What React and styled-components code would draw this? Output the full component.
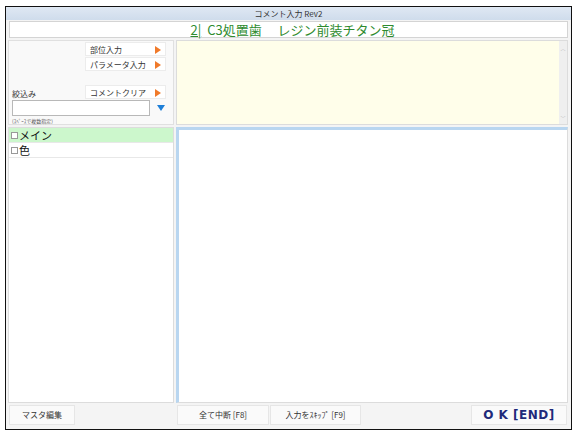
import React from 'react'
import styled, { createGlobalStyle } from 'styled-components'

const GlobalStyle = createGlobalStyle`
  html, body { margin: 0; padding: 0; background: #ffffff; }
  body { font-family: "Noto Sans CJK JP", "Liberation Sans", sans-serif; }
`;

const Page = styled.div`
  width: 578px;
  height: 438px;
  padding: 6px 6px 0 5px;
  box-sizing: border-box;
  background: #ffffff;
`;

const Window = styled.div`
  width: 567px;
  height: 424px;
  border: 1px solid #111;
  box-sizing: border-box;
  background: #f4f4f4;
  display: flex;
  flex-direction: column;
`;

const TitleBar = styled.div`
  height: 13px;
  background: linear-gradient(#dfe8f3, #cfdcec);
  font-size: 8px;
  line-height: 13px;
  color: #333;
  text-align: center;
`;

const Header = styled.div`
  margin: 1px 3px 0 3px;
  height: 15px;
  background: #fff;
  border: 1px solid #d4d4d4;
  font-size: 13px;
  line-height: 15px;
  color: #2e8b2e;
  text-align: center;
  padding-left: 8px;
`;

const ToothNo = styled.span`
  text-decoration: underline;
  margin-right: 6px;
`;

const Body = styled.div`
  flex: 1;
  display: grid;
  grid-template-columns: 166px 1fr;
  grid-template-rows: 85px 1fr;
  gap: 2px;
  padding: 2px 3px 0 2px;
  min-height: 0;
`;

const FilterPanel = styled.div`
  background: #f9f9f9;
  border: 1px solid #e0e0e0;
  display: flex;
  flex-direction: column;
  padding: 0 0 0 3px;
  box-sizing: border-box;
`;

const ActionButton = styled.div`
  margin-left: 73px;
  width: 81px;
  height: 14px;
  background: #fff;
  border: 1px solid #ececec;
  font-size: 8px;
  line-height: 14px;
  color: #333;
  padding-left: 4px;
  box-sizing: border-box;
  position: relative;
  margin-top: ${p => p.gap || 1}px;
  &::after {
    content: '';
    position: absolute;
    right: 4px;
    top: 3px;
    border-left: 6px solid #f07a2a;
    border-top: 4px solid transparent;
    border-bottom: 4px solid transparent;
  }
`;

const FilterRow = styled.div`
  display: flex;
  align-items: center;
  margin-top: 2px;
`;

const FilterLabel = styled.div`
  font-size: 8px;
  color: #333;
  margin-top: -11px;
  height: 10px;
`;

const FilterInput = styled.div`
  width: 138px;
  height: 16px;
  background: #fff;
  border: 1px solid #b8b8b8;
  box-sizing: border-box;
`;

const DropArrow = styled.div`
  margin-left: 7px;
  border-top: 6px solid #1e7fd8;
  border-left: 4px solid transparent;
  border-right: 4px solid transparent;
`;

const Hint = styled.div`
  font-size: 5px;
  color: #555;
  margin-top: 1px;
`;

const MemoPanel = styled.div`
  background: #fffeea;
  border: 1px solid #dcdcdc;
  position: relative;
`;

const ScrollTrack = styled.div`
  position: absolute;
  right: 0;
  top: 0;
  bottom: 0;
  width: 8px;
  background: #efefef;
  display: flex;
  flex-direction: column;
  justify-content: space-between;
  align-items: center;
  font-size: 5px;
  color: #aaa;
  padding: 3px 0;
  box-sizing: border-box;
`;

const ListPanel = styled.div`
  background: #fff;
  border: 1px solid #dcdcdc;
`;

const ListRow = styled.div`
  height: 14px;
  display: flex;
  align-items: center;
  font-size: 11px;
  color: #111;
  border-bottom: 1px solid #e8e8e8;
  background: ${p => (p.active ? '#ccf7cc' : '#fff')};
`;

const Check = styled.span`
  width: 5px;
  height: 5px;
  border: 1px solid #999;
  margin: 0 1px 0 2px;
  background: #fff;
`;

const EditPanel = styled.div`
  background: #fff;
  border: 1px solid #dcdcdc;
  border-top: 3px solid #b9d6f0;
  border-left: 3px solid #b9d6f0;
`;

const Footer = styled.div`
  height: 26px;
  display: flex;
  align-items: center;
  padding: 0 4px 3px 3px;
  box-sizing: border-box;
`;

const FooterButton = styled.div`
  width: ${p => p.w}px;
  height: 20px;
  margin-left: ${p => p.ml || 0}px;
  background: #fafafa;
  border: 1px solid #e6e6e6;
  box-sizing: border-box;
  font-size: 8px;
  line-height: 18px;
  text-align: center;
  color: #333;
`;

const OkButton = styled(FooterButton)`
  margin-left: auto;
  font-family: "DejaVu Sans", "Liberation Sans", sans-serif;
  font-weight: bold;
  font-size: 12px;
  color: #1f2a7a;
  letter-spacing: 0.5px;
`;

export default function App() {
  return (
    <Page>
      <GlobalStyle />
      <Window>
        <TitleBar>コメント入力 Rev2</TitleBar>
        <Header>
          <ToothNo>2|</ToothNo>C3処置歯　 レジン前装チタン冠
        </Header>
        <Body>
          <FilterPanel>
            <ActionButton>部位入力</ActionButton>
            <ActionButton>パラメータ入力</ActionButton>
            <ActionButton gap={14}>コメントクリア</ActionButton>
            <FilterLabel>絞込み</FilterLabel>
            <FilterRow>
              <FilterInput />
              <DropArrow />
            </FilterRow>
            <Hint>(ｽﾍﾟｰｽで複数指定)</Hint>
          </FilterPanel>
          <MemoPanel>
            <ScrollTrack>
              <span>︿</span>
              <span>﹀</span>
            </ScrollTrack>
          </MemoPanel>
          <ListPanel>
            <ListRow active>
              <Check />
              メイン
            </ListRow>
            <ListRow>
              <Check />
              色
            </ListRow>
          </ListPanel>
          <EditPanel />
        </Body>
        <Footer>
          <FooterButton w={66}>マスタ編集</FooterButton>
          <FooterButton w={92} ml={102}>全て中断 [F8]</FooterButton>
          <FooterButton w={91} ml={1}>入力をｽｷｯﾌﾟ [F9]</FooterButton>
          <OkButton w={96}>O K [END]</OkButton>
        </Footer>
      </Window>
    </Page>
  )
}
